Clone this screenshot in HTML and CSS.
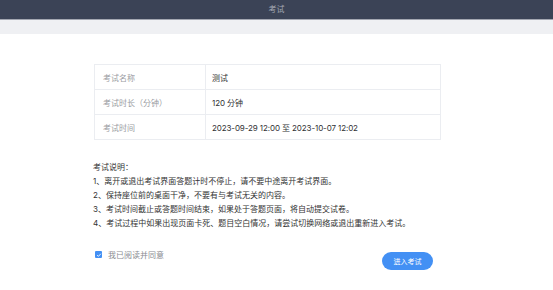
FILE: index.html
```html
<!DOCTYPE html>
<html lang="zh-CN">
<head>
  <meta charset="UTF-8" />
  <title>考试</title>
  <link rel="stylesheet" href="styles.css">
</head>
<body>
  <div class="top-bar">考试</div>
  <div class="sub-bar"></div>

  <div class="content">
    <table class="info-table">
      <tr>
        <td class="label">考试名称</td>
        <td class="value">测试</td>
      </tr>
      <tr>
        <td class="label">考试时长（分钟）</td>
        <td class="value">120 分钟</td>
      </tr>
      <tr>
        <td class="label">考试时间</td>
        <td class="value">2023-09-29 12:00 至 2023-10-07 12:02</td>
      </tr>
    </table>

    <div class="notes">
      <p>考试说明：</p>
      <p>1、离开或退出考试界面答题计时不停止，请不要中途离开考试界面。</p>
      <p>2、保持座位前的桌面干净，不要有与考试无关的内容。</p>
      <p>3、考试时间截止或答题时间结束，如果处于答题页面，将自动提交试卷。</p>
      <p>4、考试过程中如果出现页面卡死、题目空白情况，请尝试切换网络或退出重新进入考试。</p>
    </div>

    <div class="actions">
      <label class="agree">
        <span class="check">
          <svg viewBox="0 0 8 8" width="6" height="6"><path d="M1.5 4.2 L3.2 5.8 L6.5 2.3" fill="none" stroke="#fff" stroke-width="1.2"/></svg>
        </span>
        我已阅读并同意
      </label>
      <button type="button" class="start-btn">进入考试</button>
    </div>
  </div>
</body>
</html>
```

FILE: styles.css
```css
:root {
  --dark: #3b4356;
  --band: #eff0f3;
  --border: #ebedf1;
  --label: #9a9ca2;
  --text: #303133;
  --blue: #4390f4;
}

body {
  margin: 0;
  font-family: Inter, "Noto Sans CJK SC", sans-serif;
  background: #fff;
  color: var(--text);
}

.top-bar {
  height: 19px;
  line-height: 19px;
  background: var(--dark);
  color: #a4a9b4;
  font-size: 8px;
  text-align: center;
  border-bottom: 1px solid #a3a7b1;
}

.sub-bar {
  height: 14px;
  background: var(--band);
}

.content {
  padding: 30px 0 0 94px;
  width: 347px;
}

.info-table {
  width: 347px;
  border-collapse: collapse;
  font-size: 8px;
}

.info-table td {
  height: 24px;
  border: 1px solid var(--border);
  padding: 0 8px;
}

.info-table .label {
  width: 94px;
  color: var(--label);
}

.info-table .value {
  padding-left: 6px;
  color: var(--text);
  letter-spacing: -0.1px;
}

.notes {
  margin-top: 20px;
  margin-left: -1px;
  font-size: 8px;
  color: #333;
}

.notes p {
  margin: 0;
  line-height: 14px;
}

.actions {
  width: 339px;
  margin-top: 19px;
  display: flex;
  justify-content: space-between;
  align-items: flex-start;
}

.agree {
  display: flex;
  align-items: center;
  gap: 6px;
  font-size: 8px;
  color: #8a8c91;
  margin-left: 1px;
}

.check {
  width: 7px;
  height: 7px;
  border-radius: 1px;
  background: var(--blue);
  display: flex;
  align-items: center;
  justify-content: center;
}

.start-btn {
  width: 51px;
  height: 18px;
  margin-top: 3px;
  border: none;
  border-radius: 9px;
  background: var(--blue);
  color: #fff;
  font-family: inherit;
  font-size: 7px;
  padding: 0;
}
```
